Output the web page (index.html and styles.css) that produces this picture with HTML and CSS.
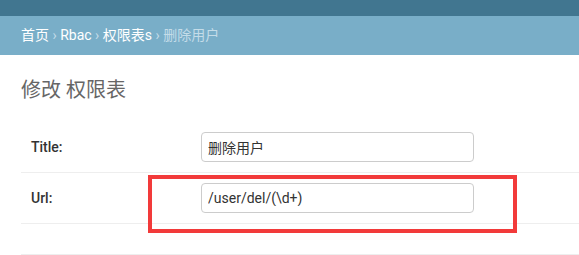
FILE: index.html
```html
<!DOCTYPE html>
<html lang="zh-CN">
<head>
    <meta charset="UTF-8">
    <title>修改 权限表</title>
    <link rel="stylesheet" href="styles.css">
</head>
<body>
    <div class="header"></div>
    <div class="breadcrumbs">
        <a href="#">首页</a> <span class="sep">›</span> <a href="#">Rbac</a> <span class="sep">›</span> <a href="#">权限表s</a> <span class="sep">›</span> <span class="current">删除用户</span>
    </div>

    <div class="content">
        <h1 class="page-title">修改 权限表</h1>

        <form class="change-form">
            <div class="form-row">
                <label class="form-label">Title:</label>
                <input class="text-input" type="text" value="删除用户">
            </div>
            <div class="form-row">
                <label class="form-label">Url:</label>
                <input class="text-input" type="text" value="/user/del/(\d+)">
                <div class="highlight"></div>
            </div>
            <div class="submit-row"></div>
        </form>
    </div>
</body>
</html>
```

FILE: styles.css
```css
* {
    margin: 0;
    padding: 0;
    box-sizing: border-box;
}

body {
    font-family: Roboto, "Noto Sans CJK SC", sans-serif;
    color: #333;
    background: #fff;
    overflow: hidden;
}

.header {
    height: 16px;
    background: #417690;
}

.breadcrumbs {
    height: 39px;
    line-height: 39px;
    padding: 0 21px;
    background: #79aec8;
    color: #c4dce8;
    font-size: 14px;
}

.breadcrumbs a {
    color: #fff;
    text-decoration: none;
}

.breadcrumbs .sep {
    color: #c4dce8;
}

.content {
    padding: 23px 0 0 21px;
}

.page-title {
    font-size: 20px;
    line-height: 24px;
    font-weight: 400;
    color: #666;
    margin-bottom: 20px;
}

.form-row {
    position: relative;
    display: flex;
    align-items: center;
    padding: 10px;
    border-bottom: 1px solid #eee;
}

.form-label {
    width: 170px;
    padding-right: 10px;
    font-size: 14px;
    font-weight: 500;
    color: #333;
}

.text-input {
    width: 273px;
    height: 30px;
    padding: 5px 6px;
    border: 1px solid #ccc;
    border-radius: 4px;
    font-family: Roboto, "Noto Sans CJK SC", sans-serif;
    font-size: 14px;
    color: #333;
    background: #fff;
}

.highlight {
    position: absolute;
    left: 127px;
    top: 2px;
    width: 369px;
    height: 58px;
    border: 4px solid #f23a3a;
    pointer-events: none;
}

.submit-row {
    margin-top: 30px;
    border-top: 1px solid #eee;
}
```
